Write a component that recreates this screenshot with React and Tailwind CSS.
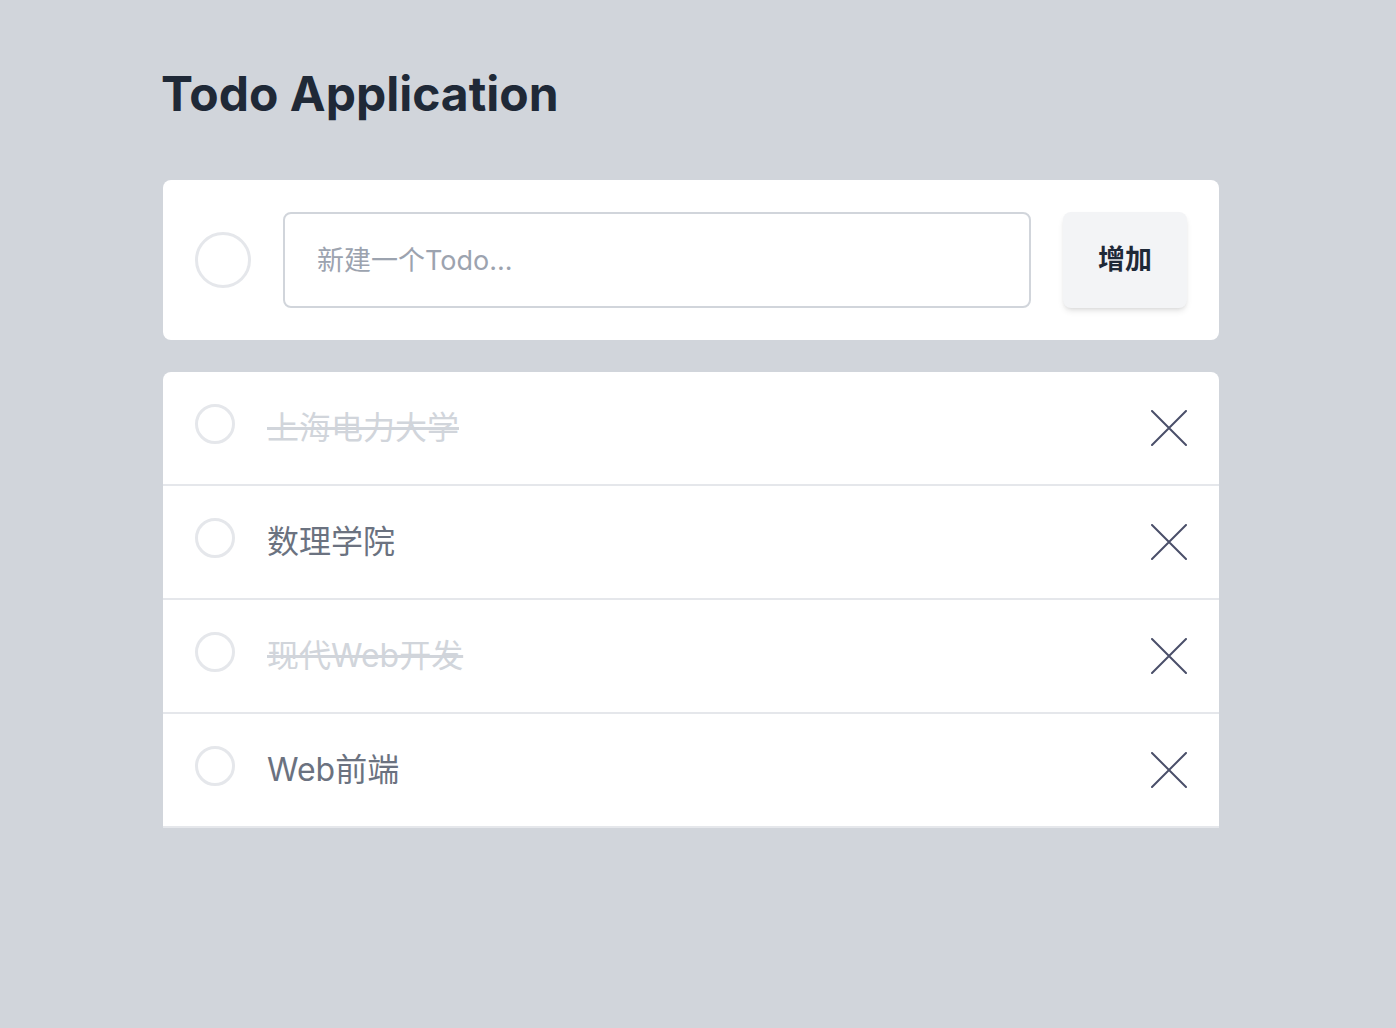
import React, { useState } from "react";

const initialTodos = [
  { id: 1, text: "上海电力大学", done: true },
  { id: 2, text: "数理学院", done: false },
  { id: 3, text: "现代Web开发", done: true },
  { id: 4, text: "Web前端", done: false },
];

const CloseIcon = () => (
  <svg width="36" height="36" viewBox="0 0 36 36" fill="none">
    <path
      d="M1 1L35 35M35 1L1 35"
      stroke="#4a4f69"
      strokeWidth="2"
      strokeLinecap="round"
    />
  </svg>
);

const App = () => {
  const [todos, setTodos] = useState(initialTodos);
  const [text, setText] = useState("");

  const addTodo = () => {
    if (!text.trim()) return;
    setTodos([...todos, { id: Date.now(), text: text.trim(), done: false }]);
    setText("");
  };

  const toggle = (id) =>
    setTodos(todos.map((t) => (t.id === id ? { ...t, done: !t.done } : t)));

  const remove = (id) => setTodos(todos.filter((t) => t.id !== id));

  return (
    <div
      className="min-h-screen bg-[#d1d5db] pt-[70px]"
      style={{ fontFamily: "Inter, 'Noto Sans CJK SC', sans-serif" }}
    >
      <div className="ml-[163px] w-[1056px]">
        <h1 className="-ml-[2px] text-[48px] leading-[48px] font-bold text-[#1f2937]">
          Todo Application
        </h1>

        {/* New todo */}
        <div className="mt-[62px] flex items-center gap-8 rounded-lg bg-white p-8">
          <div className="h-[56px] w-[56px] shrink-0 rounded-full border-[3px] border-[#e5e7eb]" />
          <input
            value={text}
            onChange={(e) => setText(e.target.value)}
            onKeyDown={(e) => e.key === "Enter" && addTodo()}
            placeholder="新建一个Todo..."
            className="h-[96px] flex-1 rounded-lg border-2 border-[#d1d5db] px-8 text-[27px] text-[#374151] outline-none placeholder:text-[#9ca3af]"
          />
          <button
            onClick={addTodo}
            className="h-[96px] w-[124px] rounded-lg bg-[#f3f4f6] text-[27px] font-bold text-[#1f2937] shadow-md"
          >
            增加
          </button>
        </div>

        {/* List */}
        <ul className="mt-8 overflow-hidden rounded-t-lg bg-white">
          {todos.map((todo) => (
            <li
              key={todo.id}
              className="flex items-start border-b-2 border-[#e5e7eb] p-8"
            >
              <button
                onClick={() => toggle(todo.id)}
                className="h-10 w-10 shrink-0 rounded-full border-[3px] border-[#e5e7eb]"
              />
              <span
                className={`ml-8 flex-1 text-[32px] leading-[48px] ${
                  todo.done ? "text-[#d1d5db] line-through" : "text-[#6b7280]"
                }`}
              >
                {todo.text}
              </span>
              <button
                onClick={() => remove(todo.id)}
                className="mt-[5px] flex h-[38px] w-[36px] items-center justify-center"
              >
                <CloseIcon />
              </button>
            </li>
          ))}
        </ul>
      </div>
    </div>
  );
};

export default App;
